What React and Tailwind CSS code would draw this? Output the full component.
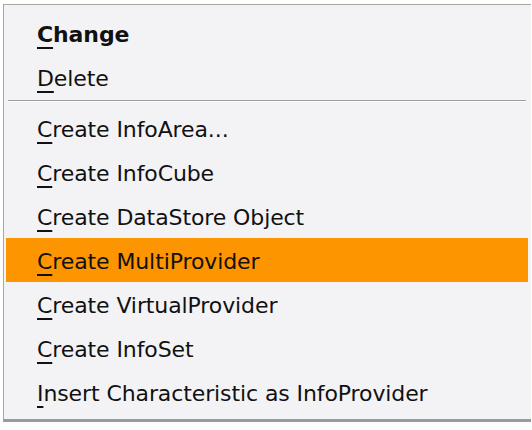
const ITEMS = [
  { key: "C", rest: "hange", bold: true },
  { key: "D", rest: "elete" },
  { sep: true },
  { key: "C", rest: "reate InfoArea..." },
  { key: "C", rest: "reate InfoCube" },
  { key: "C", rest: "reate DataStore Object" },
  { key: "C", rest: "reate MultiProvider", active: true },
  { key: "C", rest: "reate VirtualProvider" },
  { key: "C", rest: "reate InfoSet" },
  { key: "I", rest: "nsert Characteristic as InfoProvider" },
];

export default function App() {
  return (
    <div className="w-[532px] h-[430px] bg-white pt-[4px] pl-[3px]" style={{ fontFamily: '"DejaVu Sans", sans-serif' }}>
      <div className="w-[528px] bg-[#f3f3f6] border-t border-l border-[#a9a79c] border-b-[3px] border-b-[#9a9a9a] pt-[6px] pb-[5px] pl-[2px] pr-[3px]">
        {ITEMS.map((it, i) =>
          it.sep ? (
            <div key={i} className="h-[7px] pt-[1px] px-[2px]">
              <div className="h-[1px] bg-[#9c9c9c]" />
              <div className="h-[1px] bg-white" />
            </div>
          ) : (
            <div key={i}
              className={`h-[44px] flex items-center pt-[3px] pl-[31px] text-[22px] tracking-[-0.1px] text-[#111] ${it.active ? "bg-[#fd9500]" : ""} ${it.bold ? "font-bold" : ""}`}>
              <span className="underline underline-offset-[5px] decoration-[2px]">{it.key}</span>
              <span>{it.rest}</span>
            </div>
          )
        )}
      </div>
    </div>
  );
}
